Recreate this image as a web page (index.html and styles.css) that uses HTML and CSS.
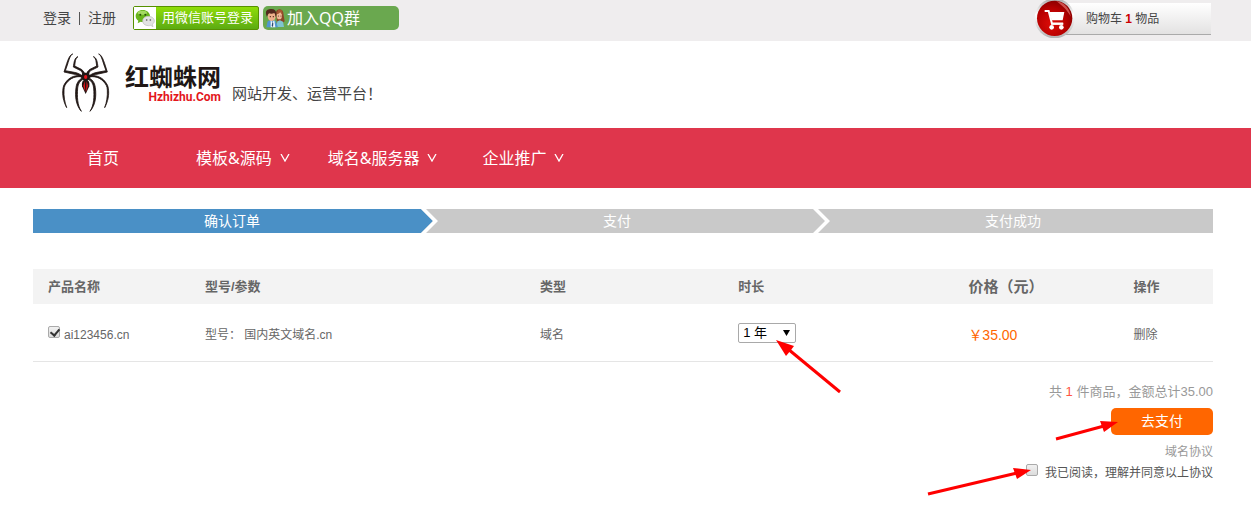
FILE: index.html
```html
<!DOCTYPE html>
<html lang="zh-CN">
<head>
<meta charset="utf-8">
<title>确认订单 - 红蜘蛛网</title>
<link rel="stylesheet" href="styles.css">
</head>
<body>
<header>
  <div class="topbar">
    <div class="account">
      <a href="#">登录</a><span class="divider"></span><a href="#">注册</a>
      <a class="wechat" href="#">
        <svg class="wechat-icon" viewBox="0 0 66 66" aria-hidden="true">
          <rect width="66" height="66" fill="#fff"/>
          <path d="M26 9C14 9 5 17 5 27c0 6 3 11 8 14l-2 8 9-5c3 1 8 1 11 0 10-2 17-9 17-17C48 17 38 9 26 9z" fill="#69b51c"/>
          <ellipse cx="25" cy="17" rx="14" ry="6" fill="#a4da62"/>
          <circle cx="19" cy="23" r="3" fill="#254b0a"/><circle cx="34" cy="23" r="3" fill="#254b0a"/>
          <path d="M43 28c-10 0-17 6-17 14s7 14 17 14c3 0 5 0 7-1l7 4-2-7c4-3 6-6 6-10 0-8-8-14-18-14z" fill="#e2e3e3" stroke="#b9bcb9" stroke-width="2"/>
          <circle cx="38" cy="39" r="2.5" fill="#555"/><circle cx="49" cy="39" r="2.5" fill="#555"/>
        </svg>
        <span>用微信账号登录</span>
      </a>
      <a class="qq" href="#">
        <svg class="qq-icon" viewBox="0 0 60 60" aria-hidden="true">
          <path d="M33 12C36 0 53 1 55 14c1 10 3 18 4 26l-8 6H36z" fill="#8b4527"/>
          <path d="M34 57l3-17 8-3 9 4 3 16z" fill="#7fc4cf"/>
          <ellipse cx="43" cy="23" rx="8" ry="11" fill="#f0b896"/>
          <path d="M35 19c5-1 9-4 11-8 2 5 5 8 7 9l-2-13-11-2z" fill="#a75832"/>
          <path d="M4 58l4-18 10-5 14 4 7 19z" fill="#5096d1"/>
          <path d="M17 36l5 7 6-6 3 21H17z" fill="#edf5fa"/><path d="M22 42l3 3-1 12-4-3z" fill="#28466b"/>
          <ellipse cx="20" cy="25" rx="12" ry="14" fill="#edb08b"/>
          <path d="M6 27C-3 7 9 3 18 3c13-1 20 10 14 25-1-6-2-10-4-13-7 4-13 2-16 1-3 3-4 6-6 11z" fill="#54291e"/>
          <circle cx="16" cy="26" r="2" fill="#482217"/><circle cx="25" cy="26" r="2" fill="#482217"/>
          <circle cx="40" cy="24" r="1.6" fill="#482217"/><circle cx="48" cy="24" r="1.6" fill="#482217"/>
        </svg>
        <span>加入QQ群</span>
      </a>
    </div>
    <a class="cart" href="#">
      <svg class="cart-icon" viewBox="0 0 126 114" aria-hidden="true">
        <defs>
          <radialGradient id="ball" cx=".4" cy=".65" r=".65"><stop offset="0" stop-color="#dc0c08"/><stop offset=".7" stop-color="#b40000"/><stop offset="1" stop-color="#8d0000"/></radialGradient>
          <linearGradient id="ring" x2="0" y2="1"><stop offset="0" stop-color="#aaa"/><stop offset=".4" stop-color="#fff"/><stop offset="1" stop-color="#b2b2b2"/></linearGradient>
        </defs>
        <circle cx="62" cy="55" r="60" fill="url(#ring)"/>
        <circle cx="62" cy="55" r="53" fill="url(#ball)"/>
        <path d="M67 3c23 4 41 22 43 47C101 31 84 16 67 3z" fill="#ef7974" opacity=".65"/>
        <path d="M32 33h12l10 38h34" fill="none" stroke="#fff" stroke-width="6"/>
        <path d="M46 36h45l-5 25H53z" fill="#fff"/>
        <path d="M52 71h35" stroke="#fff" stroke-width="6"/>
        <circle cx="53" cy="82" r="7" fill="#fff"/><circle cx="82" cy="82" r="7" fill="#fff"/>
      </svg>
      <span>购物车 <b>1</b> 物品</span>
    </a>
  </div>

  <div class="brand">
    <svg class="spider" viewBox="36 24 144 180" aria-hidden="true">
      <g id="legs" fill="#201715" stroke="#201715" stroke-width="2.5" stroke-linejoin="round">
        <path d="M68 27C61 30 57 44 53 57l-7 20 27 5c12 2 19 7 27 13l-2 5c-9-8-17-12-29-13l-27-6 8-25C55 42 59 30 68 27z"/>
        <path d="M84 35c-9 4-8 16-10 28l20 10c6 4 8 9 8 16l-4-1c-1-7-4-10-8-12L70 66c2-13 3-28 14-31z"/>
        <path d="M100 96c-17-3-33 0-45 12-9 9-13 17-13 27-1 19 2 37 8 53-10-19-14-38-11-58 1-11 9-20 16-27 13-11 31-14 46-9z"/>
        <path d="M101 102c-10 4-17 14-18 27-2 27-1 51 11 70-15-17-20-42-16-71 2-16 10-27 23-30z"/>
      </g>
      <use href="#legs" transform="matrix(-1 0 0 1 214 0)"/>
      <path d="M98 85l3-7 3 5h6l3-5 3 7 5 8-6 12h-16l-6-12z" fill="#201715"/>
      <path d="M107 101c9 4 13 11 11 23l-11 23-11-23c-2-12 2-19 11-23z" fill="#201715"/>
      <ellipse cx="107" cy="96" rx="5" ry="6" fill="#e3161b"/>
      <path d="M104 108l-4 15 6 18zM110 108l4 15-6 18z" fill="#e3161b"/>
    </svg>
    <div class="wordmark">
      <strong>红蜘蛛网</strong>
      <span>Hzhizhu.Com</span>
    </div>
    <p class="slogan">网站开发、运营平台！</p>
  </div>

  <nav class="nav">
    <a href="#">首页</a>
    <a href="#">模板&amp;源码<svg class="caret" viewBox="0 0 10 8"><path d="M1 0l4 7 4-7"/></svg></a>
    <a href="#">域名&amp;服务器<svg class="caret" viewBox="0 0 10 8"><path d="M1 0l4 7 4-7"/></svg></a>
    <a href="#">企业推广<svg class="caret" viewBox="0 0 10 8"><path d="M1 0l4 7 4-7"/></svg></a>
  </nav>
</header>

<main class="order">
  <ol class="steps">
    <li class="current">确认订单</li>
    <li><svg class="chevron" viewBox="0 0 18 24"><path d="M0 0l12 12L0 24z" fill="#4a90c6"/><path d="M0 0h5l12 12L5 24H0l12-12z" fill="#fff"/></svg>支付</li>
    <li><svg class="chevron" viewBox="0 0 18 24"><path d="M0 0h5l12 12L5 24H0l12-12z" fill="#fff"/></svg>支付成功</li>
  </ol>

  <table class="items">
    <colgroup><col class="col-name"><col class="col-spec"><col class="col-type"><col class="col-term"><col class="col-price"><col class="col-action"></colgroup>
    <thead>
      <tr><th>产品名称</th><th>型号/参数</th><th>类型</th><th>时长</th><th class="price-head">价格（元）</th><th>操作</th></tr>
    </thead>
    <tbody>
      <tr>
        <td><label class="product"><input class="check" type="checkbox" checked><span>ai123456.cn</span></label></td>
        <td>型号： 国内英文域名.cn</td>
        <td>域名</td>
        <td>
          <div class="term">
            <select aria-label="时长"><option>1 年</option><option>2 年</option><option>3 年</option></select>
            <svg class="triangle" viewBox="0 0 7 6"><path d="M0 0h7L3.5 6z"/></svg>
            <svg class="pointer pointer-term" viewBox="0 0 66 54"><path d="M12 9l52 43"/><polygon points="0,0 18,6 15,10 10,16"/></svg>
          </div>
        </td>
        <td class="price">￥35.00</td>
        <td><a href="#">删除</a></td>
      </tr>
    </tbody>
  </table>

  <section class="checkout">
    <p class="total">共 <em>1</em> 件商品，金额总计35.00</p>
    <div class="pay">
      <button type="button">去支付</button>
      <svg class="pointer pointer-pay" viewBox="0 0 64 22"><path d="M1 19l48-13"/><polygon points="63,2 45,1 49,12"/></svg>
    </div>
    <a class="terms" href="#">域名协议</a>
    <label class="agree">
      <input class="check" type="checkbox"><span>我已阅读，理解并同意以上协议</span>
      <svg class="pointer pointer-agree" viewBox="0 0 106 28"><path d="M1 26l89-21"/><polygon points="104,2 86,0 90,11"/></svg>
    </label>
  </section>
</main>
</body>
</html>
```

FILE: styles.css
```css
* { box-sizing: border-box; }

body {
  margin: 0;
  background: #fff;
  color: #666;
  font: 12px/18px "Liberation Sans", "Noto Sans CJK SC", sans-serif;
}

a { color: inherit; text-decoration: none; }
p { margin: 0; }
svg { display: block; flex: none; }

.topbar {
  display: flex;
  justify-content: space-between;
  height: 41px;
  padding: 0 40px 0 43px;
  background: #efedee;
  color: #444;
}

.account {
  display: flex;
  align-items: center;
  height: 36px;
  font-size: 14px;
}

.divider { width: 1px; height: 13px; margin: 0 8px; background: #555; }

.wechat, .qq { display: flex; align-items: center; height: 24px; color: #fff; white-space: nowrap; }

.wechat {
  gap: 6px;
  width: 126px;
  margin: 0 4px 0 17px;
  border: 1px solid #579100;
  border-radius: 2px;
  background: linear-gradient(#8fdd08, #5cab12);
  font-size: 13px;
}

.wechat-icon { width: 22px; height: 22px; }

.qq {
  gap: 2px;
  width: 136px;
  padding-left: 2px;
  border-radius: 5px;
  background: #6aa84f;
  font-family: "Noto Sans", "Noto Sans CJK SC", sans-serif;
  font-size: 16px;
}

.qq-icon { width: 20px; height: 20px; }

.cart {
  position: relative;
  display: flex;
  align-items: center;
  width: 146px;
  height: 32px;
  margin-top: 3px;
  padding-left: 21px;
  border-bottom: 1px solid #aaa;
  background: linear-gradient(#fff, #e3e2e2);
}

.cart-icon { position: absolute; left: -31px; top: -3px; width: 42px; height: 38px; }
.cart b { color: #c00; }

.brand {
  display: flex;
  height: 87px;
  padding: 12px 0 0 62px;
}

.spider { width: 48px; height: 60px; }

.wordmark {
  display: flex;
  flex-direction: column;
  align-items: flex-end;
  margin: 12px 0 0 15px;
  color: #201715;
  font-size: 24px;
  line-height: 26px;
}

.wordmark strong { font-weight: 700; }

.wordmark span {
  color: #e3161b;
  font: bold 12px/12px Roboto, sans-serif;
}

.slogan { margin: 32px 0 0 11px; color: #444; font-size: 15px; }

.nav {
  display: flex;
  align-items: center;
  height: 60px;
  padding-left: 87px;
  background: #df364c;
  color: #fff;
  font: 16px/24px "Noto Sans", "Noto Sans CJK SC", sans-serif;
}

.nav a { display: flex; align-items: center; gap: 8px; margin-right: 38px; }
.nav a:first-child { margin-right: 77px; }
.nav a:nth-child(3) { margin-right: 45px; }
.caret { width: 10px; height: 8px; fill: none; stroke: #fff; stroke-width: 1.3; }

.order { padding: 21px 38px 30px 33px; }

.steps {
  display: grid;
  grid-template-columns: 388fr 392fr 400fr;
  margin: 0 0 36px;
  padding: 0;
  list-style: none;
  color: #fff;
  font-size: 14px;
  line-height: 24px;
  text-align: center;
}

.steps li { position: relative; background: #c9c9c9; }
.steps .current { padding-left: 10px; background: #4a90c6; }
.chevron { position: absolute; left: 0; top: 0; width: 18px; height: 24px; }

.items { width: 100%; border-collapse: collapse; table-layout: fixed; }
.col-name { width: 13.3%; }
.col-spec { width: 28.4%; }
.col-type { width: 16.8%; }
.col-term { width: 19.5%; }
.col-price { width: 14%; }
.col-action { width: 8%; }

.items th, .items td { padding: 0 0 0 15px; text-align: left; white-space: nowrap; }
.items th { height: 35px; background: #f3f3f3; font-size: 13px; }
.items td { height: 57px; padding-top: 6px; border-bottom: 1px solid #e5e5e5; }
.items .price-head { font-size: 15px; }
.items .price { color: #f60; font-size: 14px; }

.product { display: flex; align-items: center; gap: 4px; }

.check {
  flex: none;
  appearance: none;
  width: 12px;
  height: 12px;
  margin: 0 0 6px;
  border: 1px solid #aaa;
  border-radius: 2px;
  background: linear-gradient(#f1f1f1, #dcdcdc);
}

.check:checked::before {
  content: "";
  display: block;
  width: 4px;
  height: 7px;
  margin: 0 0 0 3px;
  border: solid #333;
  border-width: 0 2px 2px 0;
  transform: rotate(40deg);
}

.term { position: relative; width: 58px; }

.term select {
  display: block;
  appearance: none;
  width: 58px;
  height: 20px;
  margin-bottom: 4px;
  padding: 0 4px;
  border: 1px solid #a9a9a9;
  border-radius: 2px;
  background: #fff;
  color: #000;
  font: 13px/18px "Liberation Sans", "Noto Sans CJK SC", sans-serif;
}

.triangle { position: absolute; right: 6px; top: 7px; width: 7px; height: 6px; pointer-events: none; }

.pointer { position: absolute; z-index: 1; fill: #f00; pointer-events: none; }
.pointer path { stroke: #f00; stroke-width: 3; }
.pointer-term { left: 38px; top: 17px; width: 66px; height: 54px; }
.pointer-pay { right: 94px; top: 12px; width: 64px; height: 22px; }
.pointer-agree { right: 180px; top: 4px; width: 106px; height: 28px; }

.checkout { display: flex; flex-direction: column; align-items: flex-end; padding-top: 21px; }
.total { margin-bottom: 7px; color: #999; font-size: 13px; }
.total em { color: #f54; font-style: normal; }

.pay { position: relative; margin-bottom: 8px; }

.pay button {
  display: block;
  width: 102px;
  height: 27px;
  padding: 0;
  border: 0;
  border-radius: 5px;
  background: #f60;
  color: #fff;
  font: 14px/27px "Liberation Sans", "Noto Sans CJK SC", sans-serif;
}

.terms { margin-bottom: 3px; color: #999; }
.agree { position: relative; display: flex; align-items: center; gap: 7px; color: #555; }
```
